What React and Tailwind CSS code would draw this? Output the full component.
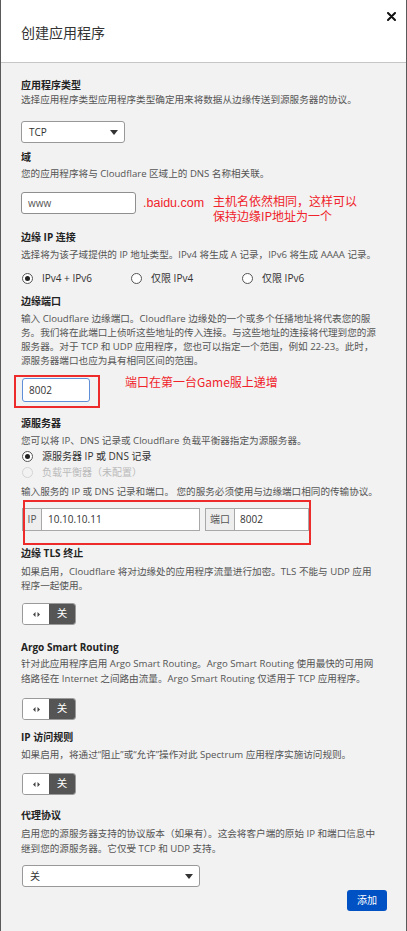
import React from 'react';

const FONT = { fontFamily: '"Open Sans", "Noto Sans CJK SC", sans-serif' };
const RED_FONT = { fontFamily: '"Noto Sans CJK SC", sans-serif' };

function Caret() {
  return (
    <svg width="8" height="5" viewBox="0 0 8 5" className="shrink-0">
      <path d="M0 0 L8 0 L4 5 Z" fill="#333" />
    </svg>
  );
}

function Radio({ checked, disabled, label, className = '' }) {
  return (
    <div className={`flex items-center h-[14px] ${className}`}>
      <span className={`w-[11px] h-[11px] rounded-full border flex items-center justify-center shrink-0 ${disabled ? 'border-[#d4d4d4] bg-[#f2f2f2]' : 'border-[#555] bg-white'}`}>
        {checked && <span className="w-[5px] h-[5px] rounded-full bg-[#222]" />}
      </span>
      <span className={`ml-[9px] text-[10px] ${disabled ? 'text-[#bbb]' : 'text-[#333]'}`}>{label}</span>
    </div>
  );
}

function Toggle({ className = '' }) {
  return (
    <div className={`flex w-[54px] h-[22px] rounded-[3px] border border-[#9a9a9a] overflow-hidden ${className}`}>
      <div className="w-[26px] bg-white flex items-center justify-center">
        <svg width="7" height="5" viewBox="0 0 7 5">
          <path d="M2.5 0 L0 2.5 L2.5 5 Z M4.5 0 L7 2.5 L4.5 5 Z" fill="#444" />
        </svg>
      </div>
      <div className="flex-1 bg-[#555] flex items-center justify-center text-white text-[10.5px]">关</div>
    </div>
  );
}

const Label = ({ children, className = '' }) => (
  <div className={`text-[10px] font-bold text-[#222] leading-[14px] ${className}`}>{children}</div>
);

const Desc = ({ children, className = '' }) => (
  <p className={`text-[9.6px] text-[#555] leading-[14px] ${className}`}>{children}</p>
);

export default function App() {
  return (
    <div className="w-[407px] min-h-[931px] bg-[#f2f2f2] border-x border-[#5a5a5a]" style={FONT}>
      <div className="relative h-[63px] bg-white border-b border-[#c6c6c6] flex items-center pl-5">
        <h1 className="text-[14px] text-[#333] pt-[2px]">创建应用程序</h1>
        <svg className="absolute right-[10px] top-[12px]" width="9" height="9" viewBox="0 0 9 9">
          <path d="M1 1 L8 8 M8 1 L1 8" stroke="#111" strokeWidth="2" strokeLinecap="round" />
        </svg>
      </div>

      <div className="pl-5 pr-[30px] pt-[15px] pb-5">
        <Label>应用程序类型</Label>
        <Desc className="mt-[1px]">选择应用程序类型应用程序类型确定用来将数据从边缘传送到源服务器的协议。</Desc>
        <div className="mt-[14px] w-[104px] h-[22px] bg-white border border-[#999] rounded-[3px] flex items-center justify-between pl-[7px] pr-[6px] text-[10px] text-[#333]">
          <span>TCP</span>
          <Caret />
        </div>

        <Label className="mt-[7px]">域</Label>
        <Desc className="mt-[3px]">您的应用程序将与 Cloudflare 区域上的 DNS 名称相关联。</Desc>
        <div className="relative mt-[11px] flex items-center">
          <div className="w-[115px] h-[22px] bg-white border border-[#8f8f8f] rounded-[3px] flex items-center pl-[6px] text-[10px] text-[#555]">www</div>
          <span className="ml-[7px] text-[12.5px] text-[#f0232a] leading-none" style={{ fontFamily: '"Liberation Sans", sans-serif' }}>.baidu.com</span>
          <div className="absolute left-[192px] top-[1px] text-[12px] leading-[15px] text-[#f0232a]" style={RED_FONT}>
            主机名依然相同，这样可以<br />保持边缘IP地址为一个
          </div>
        </div>

        <Label className="mt-[16px]">边缘 IP 连接</Label>
        <Desc className="mt-[4px] whitespace-nowrap">选择将为该子域提供的 IP 地址类型。IPv4 将生成 A 记录，IPv6 将生成 AAAA 记录。</Desc>
        <div className="mt-[9px] flex ml-[1px]">
          <Radio checked label="IPv4 + IPv6" className="w-[109px]" />
          <Radio label="仅限 IPv4" className="w-[111px]" />
          <Radio label="仅限 IPv6" />
        </div>

        <Label className="mt-[9px]">边缘端口</Label>
        <Desc className="mt-[4px] leading-[13.7px]">输入 Cloudflare 边缘端口。Cloudflare 边缘处的一个或多个任播地址将代表您的服务。我们将在此端口上侦听这些地址的传入连接。与这些地址的连接将代理到您的源服务器。对于 TCP 和 UDP 应用程序，您也可以指定一个范围，例如 22-23。此时，源服务器端口也应为具有相同区间的范围。</Desc>
        <div className="relative mt-[10px] flex items-start">
          <div className="relative w-[68px] h-[24px] bg-white border border-[#5e8fd8] rounded-[3px] flex items-center pl-[6px] text-[10px] text-[#333] ml-[1px]">
            8002
            <div className="absolute -left-[9px] -top-[4px] w-[86px] h-[33px] border-2 border-[#ee2b2b]" />
          </div>
          <span className="ml-[35px] -mt-[4px] text-[12px] leading-[16px] text-[#f0232a]" style={RED_FONT}>端口在第一台Game服上递增</span>
        </div>

        <Label className="mt-[14px]">源服务器</Label>
        <Desc className="mt-[4px]">您可以将 IP、DNS 记录或 Cloudflare 负载平衡器指定为源服务器。</Desc>
        <Radio checked label="源服务器 IP 或 DNS 记录" className="mt-[1px] ml-[1px]" />
        <Radio disabled label="负载平衡器（未配置）" className="mt-[2px] ml-[1px]" />
        <Desc className="mt-[6px] whitespace-nowrap">输入服务的 IP 或 DNS 记录和端口。 您的服务必须使用与边缘端口相同的传输协议。</Desc>
        <div className="relative mt-[9px] flex ml-[1px] text-[10px] text-[#333]">
          <div className="flex w-[178px] h-[23px] border border-[#a8a8a8] bg-white">
            <div className="w-[19px] bg-[#eee] border-r border-[#a8a8a8] flex items-center justify-center text-[#555]">IP</div>
            <div className="flex-1 flex items-center pl-[6px]">10.10.10.11</div>
          </div>
          <div className="ml-[5px] flex w-[104px] h-[23px] border border-[#a8a8a8] bg-white">
            <div className="w-[29px] bg-[#eee] border-r border-[#a8a8a8] flex items-center justify-center text-[#555]">端口</div>
            <div className="flex-1 flex items-center pl-[5px]">8002</div>
          </div>
          <div className="absolute left-[1px] -top-[8px] w-[288px] h-[45px] border-2 border-[#ee2b2b]" />
        </div>

        <Label className="mt-[15px]">边缘 TLS 终止</Label>
        <Desc className="mt-[5px]">如果启用，Cloudflare 将对边缘处的应用程序流量进行加密。TLS 不能与 UDP 应用程序一起使用。</Desc>
        <Toggle className="mt-[10px] ml-[1px]" />

        <Label className="mt-[15px]">Argo Smart Routing</Label>
        <Desc className="mt-[2px] leading-[15px]">针对此应用程序启用 Argo Smart Routing。Argo Smart Routing 使用最快的可用网络路径在 Internet 之间路由流量。Argo Smart Routing 仅适用于 TCP 应用程序。</Desc>
        <Toggle className="mt-[12px] ml-[1px]" />

        <Label className="mt-[10px]">IP 访问规则</Label>
        <Desc className="mt-[4px]">如果启用，将通过“阻止”或“允许”操作对此 Spectrum 应用程序实施访问规则。</Desc>
        <Toggle className="mt-[11px] ml-[1px]" />

        <Label className="mt-[13px]">代理协议</Label>
        <Desc className="mt-[4px] leading-[15px]">启用您的源服务器支持的协议版本（如果有）。这会将客户端的原始 IP 和端口信息中继到您的源服务器。它仅受 TCP 和 UDP 支持。</Desc>
        <div className="mt-[9px] ml-[1px] w-[178px] h-[22px] bg-white border border-[#999] rounded-[3px] flex items-center justify-between pl-[7px] pr-[6px] text-[10px] text-[#333]">
          <span>关</span>
          <Caret />
        </div>
        <div className="flex justify-end mt-[3px] -mr-[11px]">
          <button className="w-[40px] h-[21px] rounded-[3px] bg-[#0051c3] text-white text-[10px]">添加</button>
        </div>
      </div>
    </div>
  );
}
